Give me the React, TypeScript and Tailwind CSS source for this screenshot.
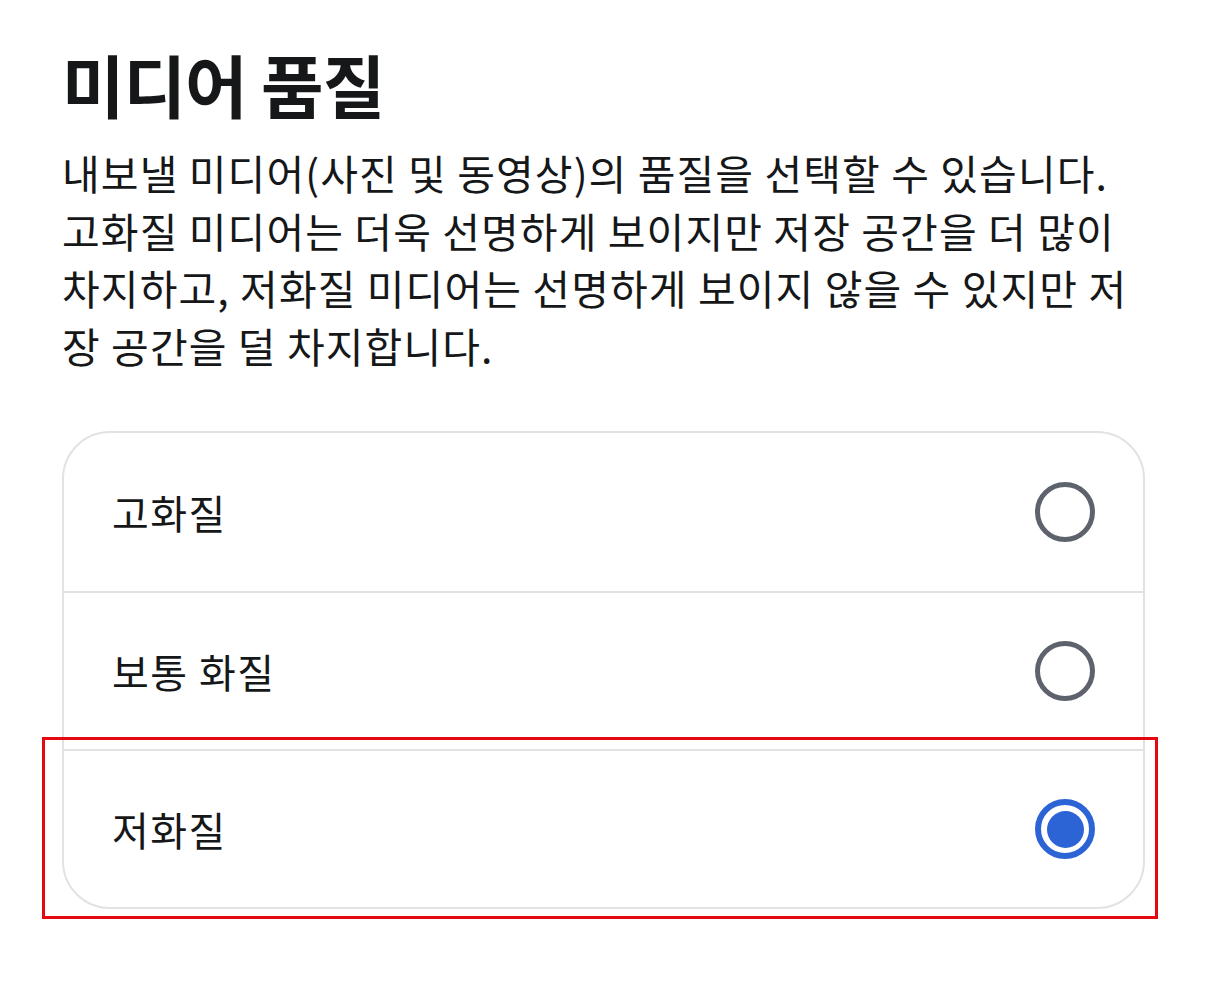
import React from "react";

const options = [
  { label: "고화질", selected: false },
  { label: "보통 화질", selected: false },
  { label: "저화질", selected: true },
];

const lines = [
  "내보낼 미디어(사진 및 동영상)의 품질을 선택할 수 있습니다.",
  "고화질 미디어는 더욱 선명하게 보이지만 저장 공간을 더 많이",
  "차지하고, 저화질 미디어는 선명하게 보이지 않을 수 있지만 저",
  "장 공간을 덜 차지합니다.",
];

function Radio({ selected }: { selected: boolean }) {
  if (selected) {
    return (
      <div className="w-[60px] h-[60px] rounded-full border-[6px] border-[#2c64d6] flex items-center justify-center">
        <div className="w-[37px] h-[37px] rounded-full bg-[#2c64d6]" />
      </div>
    );
  }
  return <div className="w-[60px] h-[60px] rounded-full border-[5px] border-[#5d626c]" />;
}

export default function App() {
  return (
    <div
      className="relative w-[1205px] h-[989px] bg-white text-[#151719] overflow-hidden"
      style={{ fontFamily: '"Noto Sans CJK KR", "Noto Sans", sans-serif' }}
    >
      <div className="pl-[62px] pr-[61px] pt-[38px]">
        <h1 className="text-[68px] leading-[92px] font-bold tracking-[-1px]">미디어 품질</h1>
        <div className="mt-[14px] text-[41px] leading-[57.5px] tracking-[1.1px]">
          {lines.map((l) => (
            <div key={l} className="whitespace-nowrap">
              {l}
            </div>
          ))}
        </div>
        <div className="mt-[57px] w-[1083px] border-2 border-[#e1e2e4] rounded-[48px] overflow-hidden">
          {options.map((o, i) => (
            <div
              key={o.label}
              className={`h-[158px] flex items-center justify-between pl-[48px] pr-[48px] ${
                i > 0 ? "border-t-2 border-[#e1e2e4]" : ""
              }`}
            >
              <span className="text-[40px] tracking-[1.5px]">{o.label}</span>
              <Radio selected={o.selected} />
            </div>
          ))}
        </div>
      </div>
      <div className="absolute left-[42px] top-[737px] w-[1116px] h-[182px] border-[3px] border-[#e3090f]" />
    </div>
  );
}
